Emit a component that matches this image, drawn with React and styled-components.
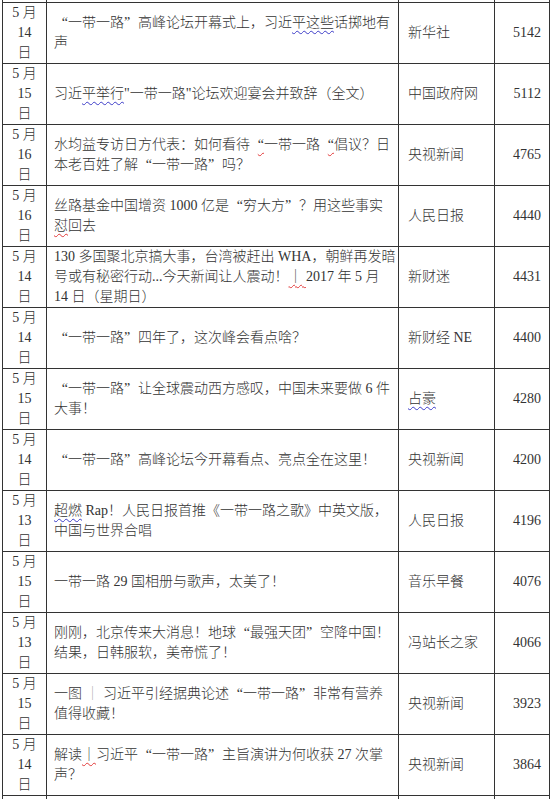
import React from "react";
import styled, { createGlobalStyle } from "styled-components";

const GlobalStyle = createGlobalStyle`
	html, body {
		margin: 0;
		padding: 0;
		background: #ffffff;
		overflow: hidden;
	}
	body {
		font-family: "Liberation Serif", "Noto Sans CJK SC", serif;
		color: #333333;
	}
`;

const Page = styled.div`
	height: 799px;
	overflow: hidden;
	padding-left: 2px;
`;

const Table = styled.table`
	border-collapse: collapse;
	table-layout: fixed;
	width: 547px;
	font-size: 14px;
	line-height: 20px;
	font-weight: 300;
`;

const Col = styled.col`
	width: ${(p) => p.$w}px;
`;

const Row = styled.tr`
	height: ${(p) => (p.$h ? p.$h : 61)}px;
`;

const Cell = styled.td`
	border: 1px solid #333333;
	padding: 0;
	vertical-align: middle;
	overflow: hidden;
`;

const StubCell = styled(Cell)`
	border-top: ${(p) => (p.$bottom ? "1px solid #333333" : "0")};
	border-bottom: ${(p) => (p.$bottom ? "0" : "1px solid #333333")};
`;

const DateCell = styled(Cell)`
	text-align: center;
`;

const TitleCell = styled(Cell)`
	padding: 0 3px 0 7px;
`;

const SourceCell = styled(Cell)`
	padding-left: 9px;
	white-space: nowrap;
`;

const CountCell = styled(Cell)`
	text-align: right;
	padding-right: 8px;
`;

const Line = styled.div`
	white-space: nowrap;
`;

const Quote = styled.span`
	padding-left: ${(p) => (p.$open ? "0.556em" : "0")};
	padding-right: ${(p) => (p.$open ? "0" : "0.556em")};
`;

const Squiggle = styled.span`
	text-decoration-line: underline;
	text-decoration-style: wavy;
	text-decoration-color: ${(p) => (p.$tone === "red" ? "#e23a3a" : "#3d3dc8")};
	text-decoration-thickness: 1px;
	text-underline-offset: 3px;
`;

const Bar = styled.span`
	color: ${(p) => (p.$muted ? "#a8a8a8" : "#444444")};
`;

const rows = [
	{
		day: 14,
		title: [
			["“一带一路”高峰论坛开幕式上，习近", { blue: "平这些" }, "话掷地有"],
			["声"],
		],
		src: ["新华社"],
		n: 5142,
	},
	{
		day: 15,
		title: [["习近", { blue: "平举行" }, "\"一带一路\"论坛欢迎宴会并致辞（全文）"]],
		src: ["中国政府网"],
		n: 5112,
	},
	{
		day: 16,
		title: [
			["水均益专访日方代表：如何看待", { red: "“" }, "一带一路", { red: "“" }, "倡议？日"],
			["本老百姓了解“一带一路”吗？"],
		],
		src: ["央视新闻"],
		n: 4765,
	},
	{
		day: 16,
		title: [["丝路基金中国增资 1000 亿是“穷大方”？用这些事实"], [{ red: "怼" }, "回去"]],
		src: ["人民日报"],
		n: 4440,
	},
	{
		day: 14,
		title: [
			["130 多国聚北京搞大事，台湾被赶出 WHA，朝鲜再发暗"],
			["号或有秘密行动...今天新闻让人震动！", { red: "｜ " }, "2017 年 5 月"],
			["14 日（星期日）"],
		],
		src: ["新财迷"],
		n: 4431,
	},
	{
		day: 14,
		title: [["“一带一路”四年了，这次峰会看点啥？"]],
		src: ["新财经 NE"],
		n: 4400,
	},
	{
		day: 15,
		title: [["“一带一路”让全球震动西方感叹，中国未来要做 6 件"], ["大事！"]],
		src: [{ blue: "占豪" }],
		n: 4280,
	},
	{
		day: 14,
		title: [["“一带一路”高峰论坛今开幕看点、亮点全在这里！"]],
		src: ["央视新闻"],
		n: 4200,
	},
	{
		day: 13,
		title: [[{ blue: "超燃" }, " Rap！人民日报首推《一带一路之歌》中英文版，"], ["中国与世界合唱"]],
		src: ["人民日报"],
		n: 4196,
	},
	{
		day: 15,
		title: [["一带一路 29 国相册与歌声，太美了！"]],
		src: ["音乐早餐"],
		n: 4076,
	},
	{
		day: 13,
		title: [["刚刚，北京传来大消息！地球“最强天团”空降中国！"], ["结果，日韩服软，美帝慌了！"]],
		src: ["冯站长之家"],
		n: 4066,
	},
	{
		day: 15,
		title: [["一图 ", { muted: "｜" }, " 习近平引经据典论述“一带一路”非常有营养"], ["值得收藏！"]],
		src: ["央视新闻"],
		n: 3923,
	},
	{
		day: 14,
		title: [["解读", { red: "｜" }, "习近平“一带一路”主旨演讲为何收获 27 次掌"], ["声？"]],
		src: ["央视新闻"],
		n: 3864,
	},
];

function withQuotes(text, keyBase) {
	return text.split(/([“”])/).map((part, i) => {
		if (part === "“") return <Quote key={keyBase + i} $open>“</Quote>;
		if (part === "”") return <Quote key={keyBase + i}>”</Quote>;
		return part;
	});
}

function renderSegments(segments) {
	return segments.map((seg, i) => {
		if (typeof seg === "string") return <React.Fragment key={i}>{withQuotes(seg, i + "-")}</React.Fragment>;
		if (seg.blue) return <Squiggle key={i} $tone="blue">{withQuotes(seg.blue, i + "b")}</Squiggle>;
		if (seg.red) return <Squiggle key={i} $tone="red">{withQuotes(seg.red, i + "r")}</Squiggle>;
		if (seg.muted) return <Bar key={i} $muted>{seg.muted}</Bar>;
		return null;
	});
}

function StubRow({ height, bottom }) {
	return (
		<Row $h={height}>
			<StubCell $bottom={bottom} />
			<StubCell $bottom={bottom} />
			<StubCell $bottom={bottom} />
			<StubCell $bottom={bottom} />
		</Row>
	);
}

function App() {
	return (
		<Page>
			<GlobalStyle />
			<Table>
				<colgroup>
					<Col $w={44} />
					<Col $w={352} />
					<Col $w={96} />
					<Col $w={55} />
				</colgroup>
				<tbody>
					<StubRow height={2} />
					{rows.map((row, i) => (
						<Row key={i}>
							<DateCell>
								<Line>5 月</Line>
								<Line>{row.day}</Line>
								<Line>日</Line>
							</DateCell>
							<TitleCell>
								{row.title.map((line, j) => (
									<Line key={j}>{renderSegments(line)}</Line>
								))}
							</TitleCell>
							<SourceCell>{renderSegments(row.src)}</SourceCell>
							<CountCell>{row.n}</CountCell>
						</Row>
					))}
					<StubRow height={6} bottom />
				</tbody>
			</Table>
		</Page>
	);
}

export default App;
